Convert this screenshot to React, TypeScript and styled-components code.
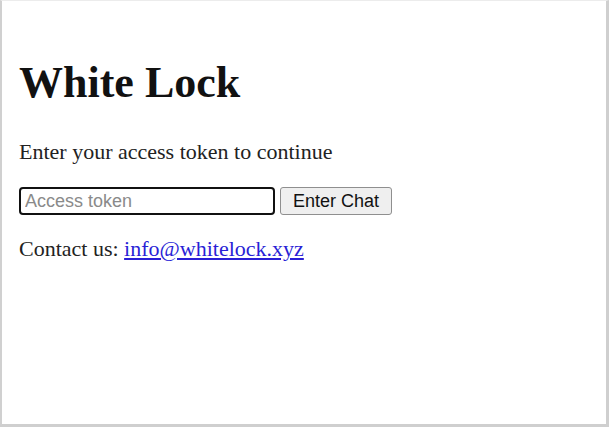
import React from "react";
import styled, { createGlobalStyle } from "styled-components";

const Global = createGlobalStyle`
  html, body { margin: 0; padding: 0; background: #ffffff; }
  #root { width: 609px; height: 427px; }
`;

const Frame = styled.div`
  box-sizing: border-box;
  width: 609px;
  height: 427px;
  border-left: 2px solid #d0d0d0;
  border-right: 3px solid #cfcfcf;
  border-bottom: 3px solid #cfcfcf;
  border-top: 1px solid #ececec;
  padding: 0 0 0 17px;
  font-family: "Liberation Serif", "Times New Roman", serif;
  color: #111;
`;

const Title = styled.h1`
  margin: 52px 0 0 0;
  font-size: 44px;
  line-height: 60px;
  font-weight: bold;
`;

const Lead = styled.p`
  margin: 24px 0 0 0;
  font-size: 22px;
  line-height: 30px;
  color: #222;
`;

const Form = styled.form`
  display: flex;
  align-items: center;
  gap: 5px;
  margin: 20px 0 0 0;
`;

const TokenInput = styled.input`
  box-sizing: border-box;
  width: 256px;
  height: 28px;
  border: 2px solid #111;
  border-radius: 4px;
  padding: 0 4px;
  font-family: "Liberation Sans", Arial, sans-serif;
  font-size: 18px;
  outline: none;
  &::placeholder { color: #8a8a8a; }
`;

const Button = styled.button`
  box-sizing: border-box;
  height: 28px;
  padding: 0 12px;
  border: 1px solid #8f8f8f;
  border-radius: 3px;
  background: #efefef;
  font-family: "Liberation Sans", Arial, sans-serif;
  font-size: 18px;
  color: #111;
`;

const Contact = styled.p`
  margin: 19px 0 0 0;
  font-size: 22px;
  line-height: 30px;
  color: #222;
`;

const Mail = styled.a`
  color: #2a1fd6;
  text-decoration: underline;
`;

export default function App() {
  return (
    <>
      <Global />
      <Frame>
        <Title>White Lock</Title>
        <Lead>Enter your access token to continue</Lead>
        <Form onSubmit={(e) => e.preventDefault()}>
          <TokenInput type="text" placeholder="Access token" />
          <Button type="submit">Enter Chat</Button>
        </Form>
        <Contact>
          Contact us: <Mail href="mailto:info@whitelock.xyz">info@whitelock.xyz</Mail>
        </Contact>
      </Frame>
    </>
  );
}
